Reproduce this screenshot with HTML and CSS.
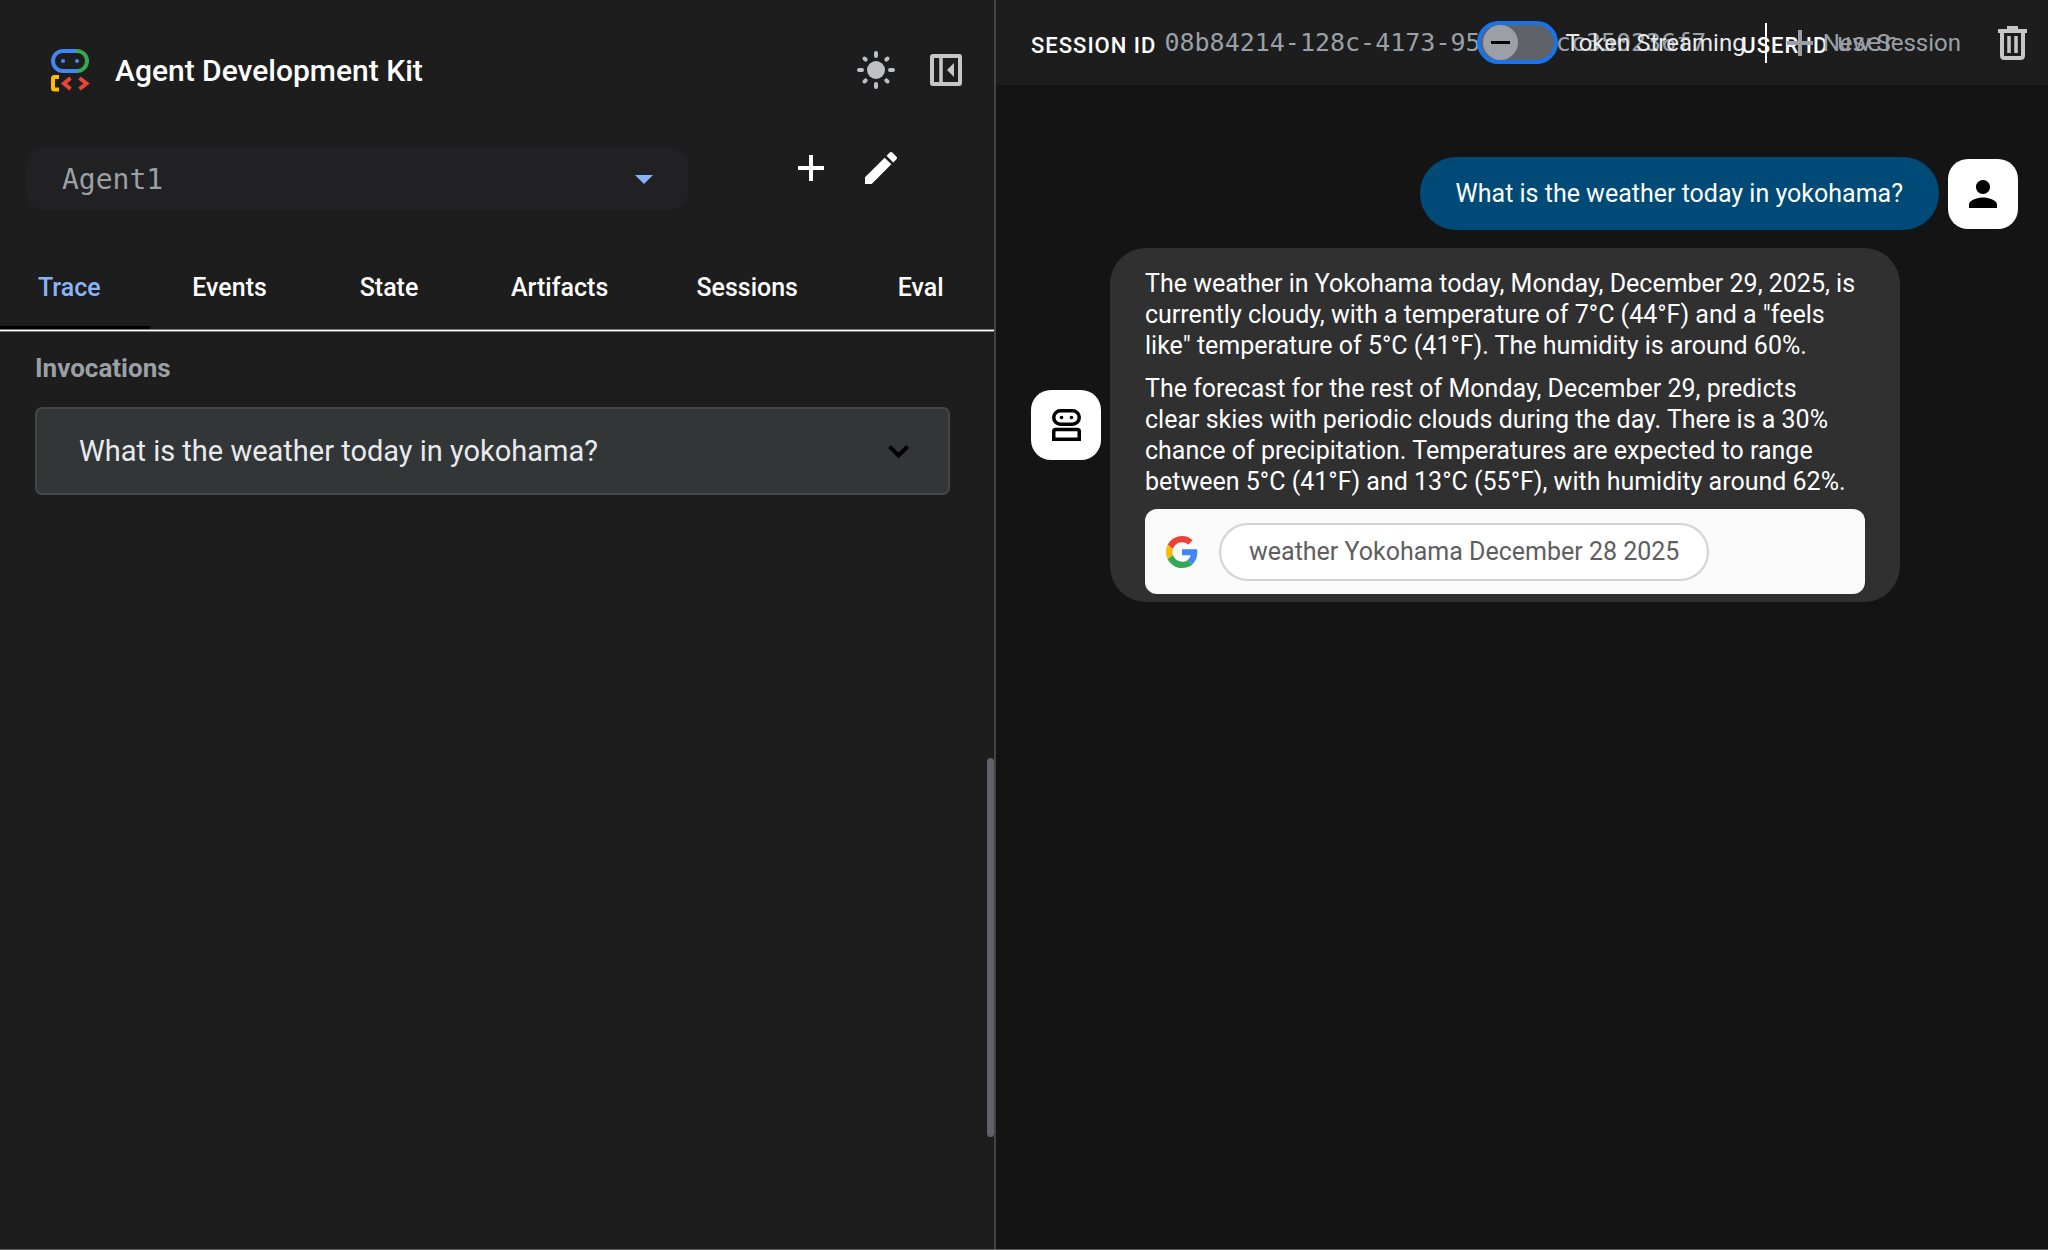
FILE: index.html
```html
<!DOCTYPE html>
<html lang="en">
<head>
<meta charset="utf-8">
<title>Agent Development Kit</title>
<link rel="stylesheet" href="styles.css">
</head>
<body>
<div class="app">
  <aside class="side">
    <header class="side-header">
      <svg class="logo" viewBox="50 48 40 45" fill="none" stroke-width="4" aria-hidden="true">
        <path d="M76 51H63a10 10 0 0 0 0 20H77" stroke="#4285f4"/>
        <path d="M76 51h1a10 10 0 0 1 0 20" stroke="#34a853"/>
        <circle cx="63" cy="61" r="2.1" fill="#4285f4"/><circle cx="77" cy="61" r="2.1" fill="#4285f4"/>
        <path d="M59 77H54.500Q53 77 53 78.500V88q0 1.500 1.500 1.500H59" stroke="#fbbc04"/>
        <path d="M70.500 78 64 83.500 70.500 89M79.500 78 86.500 83.500 79.500 89" stroke="#ea4335"/>
      </svg>
      <h1 class="title">Agent Development Kit</h1>
      <button class="icon-btn" aria-label="Toggle theme">
        <svg width="38" height="38" viewBox="0 0 38 38" stroke="#bdc1c6" stroke-width="4" stroke-linecap="round" aria-hidden="true">
          <circle cx="19" cy="19" r="9" fill="#bdc1c6" stroke="none"/>
          <path d="M19 2v3M19 33v3M2 19h3M33 19h3M7.500 7.500l1.200 1.200M29.300 29.300l1.200 1.200M7.500 30.500l1.200-1.200M29.300 8.700l1.200-1.200"/>
        </svg>
      </button>
      <button class="icon-btn" aria-label="Close panel">
        <svg width="32" height="32" viewBox="0 0 32 32" fill="none" stroke="#c7c7c7" stroke-width="4" aria-hidden="true">
          <rect x="2" y="2" width="28" height="28" rx="1"/><path d="M11 2v28" stroke-width="3.500"/>
          <path d="M24 9v14l-7-7z" fill="#c7c7c7" stroke="none"/>
        </svg>
      </button>
    </header>
    <div class="agent-row">
      <div class="agent-select">
        <select aria-label="Agent"><option>Agent1</option></select>
        <svg width="18" height="9" viewBox="0 0 18 9" aria-hidden="true"><path d="M0 0h18L9 9z" fill="#8ab4f8"/></svg>
      </div>
      <div class="agent-actions">
        <button class="icon-btn" aria-label="New agent">
          <svg width="26" height="26" viewBox="0 0 26 26" stroke="#fff" stroke-width="4" aria-hidden="true"><path d="M13 0v26M0 13h26"/></svg>
        </button>
        <button class="icon-btn" aria-label="Edit agent">
          <svg width="32" height="32" viewBox="3 3 18 18" fill="#fff" aria-hidden="true"><path d="M3 17.250V21h3.750L17.810 9.940l-3.750-3.750L3 17.250zM20.710 7.040c.39-.39.39-1.020 0-1.410l-2.340-2.340c-.39-.39-1.020-.39-1.410 0l-1.830 1.830 3.750 3.750 1.830-1.830z"/></svg>
        </button>
      </div>
    </div>
    <div class="tabs" role="tablist">
      <button class="tab active" role="tab" aria-selected="true">Trace</button>
      <button class="tab" role="tab">Events</button>
      <button class="tab" role="tab">State</button>
      <button class="tab" role="tab">Artifacts</button>
      <button class="tab" role="tab">Sessions</button>
      <button class="tab" role="tab">Eval</button>
    </div>
    <section class="trace">
      <h2 class="trace-title">Invocations</h2>
      <button class="invocation" aria-expanded="false">
        <span>What is the weather today in yokohama?</span>
        <svg width="21" height="13" viewBox="0 0 21 13" fill="none" stroke="#000" stroke-width="4" aria-hidden="true"><path d="M1.500 1.500l9 9 9-9"/></svg>
      </button>
    </section>
    <div class="scroll-thumb"></div>
  </aside>

  <main class="main">
    <header class="toolbar">
      <div class="session">
        <span class="label">SESSION ID</span>
        <span class="value">08b84214-128c-4173-9518-d6cc350236f7</span>
        <span class="label user-label">USER ID</span>
        <span class="value">user</span>
      </div>
      <div class="actions">
        <label class="streaming"><input class="switch" type="checkbox" role="switch"><span>Token Streaming</span></label>
        <span class="divider"></span>
        <button class="new-session">
          <svg width="26" height="26" viewBox="0 0 26 26" stroke="#9aa0a6" stroke-width="4" aria-hidden="true"><path d="M13 0v26M0 13h26"/></svg>
          <span>New Session</span>
        </button>
        <button class="icon-btn" aria-label="Delete session">
          <svg width="29" height="34" viewBox="0 0 29 34" fill="none" stroke="#c7c7c7" stroke-width="4" aria-hidden="true"><path d="M0 5h29M9 2h11" /><path d="M4 5v24.500q0 2.500 2.500 2.500h16q2.500 0 2.500-2.500V5" /><path d="M11 10v17M18 10v17" stroke-width="3.500"/></svg>
        </button>
      </div>
    </header>
    <div class="chat">
      <div class="message user">
        <p class="bubble">What is the weather today in yokohama?</p>
        <div class="avatar"><svg width="28" height="28" viewBox="4 4 16 16" aria-hidden="true"><path d="M12 12c2.210 0 4-1.790 4-4s-1.790-4-4-4-4 1.790-4 4 1.790 4 4 4zm0 2c-2.670 0-8 1.340-8 4v2h16v-2c0-2.660-5.330-4-8-4z"/></svg></div>
      </div>
      <div class="message bot">
        <div class="avatar"><svg width="29" height="32" viewBox="0 0 29 32" fill="none" stroke="#000" stroke-width="3.500" aria-hidden="true"><rect x="1.750" y="1.750" width="25.500" height="13.500" rx="6.750"/><path d="M1.750 30.250V22.500q0-2 2-2h21.500q2 0 2 2v7.750z"/><g fill="#000" stroke="none"><circle cx="9.500" cy="8.500" r="1.800"/><circle cx="19.500" cy="8.500" r="1.800"/></g></svg></div>
        <div class="bubble">
          <p>The weather in Yokohama today, Monday, December 29, 2025, is currently cloudy, with a temperature of 7°C (44°F) and a "feels like" temperature of 5°C (41°F). The humidity is around 60%.</p>
          <p>The forecast for the rest of Monday, December 29, predicts clear&nbsp;skies with periodic clouds during the day. There is a 30% chance of precipitation. Temperatures are expected to range between 5°C (41°F) and 13°C (55°F), with humidity around 62%.</p>
          <div class="search-card">
            <svg width="32" height="32" viewBox="0 0 48 48" aria-hidden="true"><path fill="#ea4335" d="M24 9.500c3.540 0 6.710 1.220 9.210 3.600l6.850-6.850C35.900 2.380 30.470 0 24 0 14.620 0 6.510 5.380 2.560 13.220l7.980 6.190C12.430 13.720 17.740 9.500 24 9.500z"/><path fill="#4285f4" d="M46.980 24.550c0-1.570-.15-3.090-.38-4.550H24v9.020h12.940c-.58 2.960-2.260 5.480-4.780 7.180l7.730 6c4.510-4.180 7.090-10.360 7.090-17.650z"/><path fill="#fbbc05" d="M10.530 28.590c-.48-1.450-.76-2.990-.76-4.590s.27-3.140.76-4.590l-7.980-6.190C.92 16.460 0 20.120 0 24c0 3.880.92 7.540 2.560 10.780l7.970-6.190z"/><path fill="#34a853" d="M24 48c6.480 0 11.930-2.130 15.890-5.810l-7.730-6c-2.150 1.450-4.920 2.300-8.160 2.300-6.260 0-11.570-4.220-13.470-9.910l-7.980 6.190C6.510 42.620 14.620 48 24 48z"/></svg>
            <a class="chip" href="#">weather Yokohama December 28 2025</a>
          </div>
        </div>
      </div>
    </div>
  </main>
</div>
</body>
</html>
```
FILE: styles.css
```css
* { box-sizing: border-box; }

body {
  margin: 0;
  background: #141414;
  color: #fff;
  font-family: Roboto, "Liberation Sans", sans-serif;
  font-size: 25px;
}

h1, h2, p { margin: 0; }

button {
  padding: 0;
  border: 0;
  background: none;
  color: inherit;
  font: inherit;
}

svg { display: block; flex: none; }

.app {
  display: flex;
  min-height: 100vh;
  border-bottom: 1px solid #5a5a5a;
}

/* Side panel */
.side {
  position: relative;
  flex: none;
  width: 996px;
  border-right: 2px solid #444;
  background: #1d1d1d;
}

.side-header {
  display: flex;
  align-items: center;
  gap: 35px;
  height: 140px;
  padding: 0 32px 0 50px;
}

.logo { width: 40px; height: 45px; }

.title {
  flex: 1;
  margin-left: -10px;
  font-size: 30px;
  font-weight: 500;
}

.agent-row {
  display: flex;
  align-items: flex-start;
  justify-content: space-between;
  height: 118px;
  padding: 8px 97px 0 27px;
}

.agent-select {
  display: flex;
  align-items: center;
  width: 661px;
  height: 62px;
  padding-right: 35px;
  border-radius: 18px;
  background: #212123;
}

.agent-select select {
  flex: 1;
  height: 62px;
  padding: 0 0 0 35px;
  border: 0;
  appearance: none;
  background: none;
  color: #9aa0a6;
  font: 28px "DejaVu Sans Mono", monospace;
}

.agent-actions {
  display: flex;
  align-items: center;
  gap: 41px;
  padding-top: 4px;
}

.tabs {
  display: grid;
  grid-template-columns: 154fr 167fr 151fr 185fr 201fr 96fr;
  height: 74px;
  padding: 0 0 2px 38px;
  border-bottom: 1px solid #777;
  box-shadow: inset 0 -1px #fff, inset 0 -2px #777;
}

.tab {
  position: relative;
  padding-bottom: 12px;
  text-align: left;
  font-weight: 500;
}

.tab.active { color: #8ab4f8; }

.tab.active::after {
  content: "";
  position: absolute;
  left: -38px;
  right: 42px;
  bottom: 0;
  height: 3px;
  background: #000;
}

.trace { padding: 20px 44px 0 35px; }

.trace-title {
  line-height: 32px;
  color: #9aa0a6;
  font-size: 26px;
}

.invocation {
  display: flex;
  align-items: center;
  justify-content: space-between;
  width: 100%;
  height: 88px;
  margin-top: 23px;
  padding: 0 39px 0 42px;
  border: 2px solid #444746;
  border-radius: 7px;
  background: #333637;
  color: #e8eaed;
  font-size: 29px;
}

.scroll-thumb {
  position: absolute;
  right: 0;
  top: 758px;
  width: 7px;
  height: 379px;
  border-radius: 4px;
  background: #5f6368;
}

/* Conversation */
.main { flex: 1; min-width: 0; }

.toolbar {
  display: grid;
  align-items: center;
  height: 85px;
  padding: 0 21px 0 35px;
  background: #1d1d1d;
}

.session, .actions { grid-area: 1 / 1; display: flex; align-items: center; white-space: nowrap; }

.label {
  padding-top: 6px;
  font-size: 22px;
  font-weight: 500;
  letter-spacing: 1px;
}

.value {
  margin-left: 8px;
  color: #9aa0a6;
  font-family: "DejaVu Sans Mono", monospace;
}

.user-label { margin-left: 35px; }

.actions { justify-self: end; font-size: 24px; }

.streaming { display: flex; align-items: center; gap: 8px; color: #e8eaed; }

.switch {
  position: relative;
  width: 81px;
  height: 43px;
  margin: 0;
  border: 4px solid #1a73e8;
  border-radius: 22px;
  appearance: none;
  background: #5f6368;
}

.switch::before {
  content: "";
  position: absolute;
  left: 2px;
  top: 0;
  width: 35px;
  height: 35px;
  border-radius: 50%;
  background: linear-gradient(#000, #000) center / 19px 3px no-repeat #9aa0a6;
}

.divider { width: 2px; height: 40px; margin: 0 20px 0 19px; background: #fff; }

.new-session {
  display: flex;
  align-items: center;
  gap: 10px;
  margin-right: 37px;
  color: #9aa0a6;
}

.chat {
  display: flex;
  flex-direction: column;
  gap: 18px;
  padding: 72px 30px 0 35px;
}

.message { display: flex; align-items: center; gap: 9px; }

.message.user { justify-content: flex-end; }

.avatar {
  display: grid;
  place-items: center;
  flex: none;
  width: 70px;
  height: 70px;
  border-radius: 20px;
  background: #fff;
}

.bubble { line-height: 31px; border-radius: 36px; }

.user .bubble { padding: 21px 36px; background: #004a77; }

.bot .bubble {
  display: flex;
  flex-direction: column;
  gap: 12px;
  max-width: 790px;
  padding: 20px 35px 8px;
  background: #303030;
}

.search-card {
  display: flex;
  align-items: center;
  gap: 21px;
  height: 85px;
  padding: 0 21px;
  border-radius: 12px;
  background: #fafafa;
}

.chip {
  padding: 11px 28px 12px;
  border: 2px solid #d2d2d2;
  border-radius: 29px;
  background: #fff;
  color: #5e5e5e;
  text-decoration: none;
}
```
